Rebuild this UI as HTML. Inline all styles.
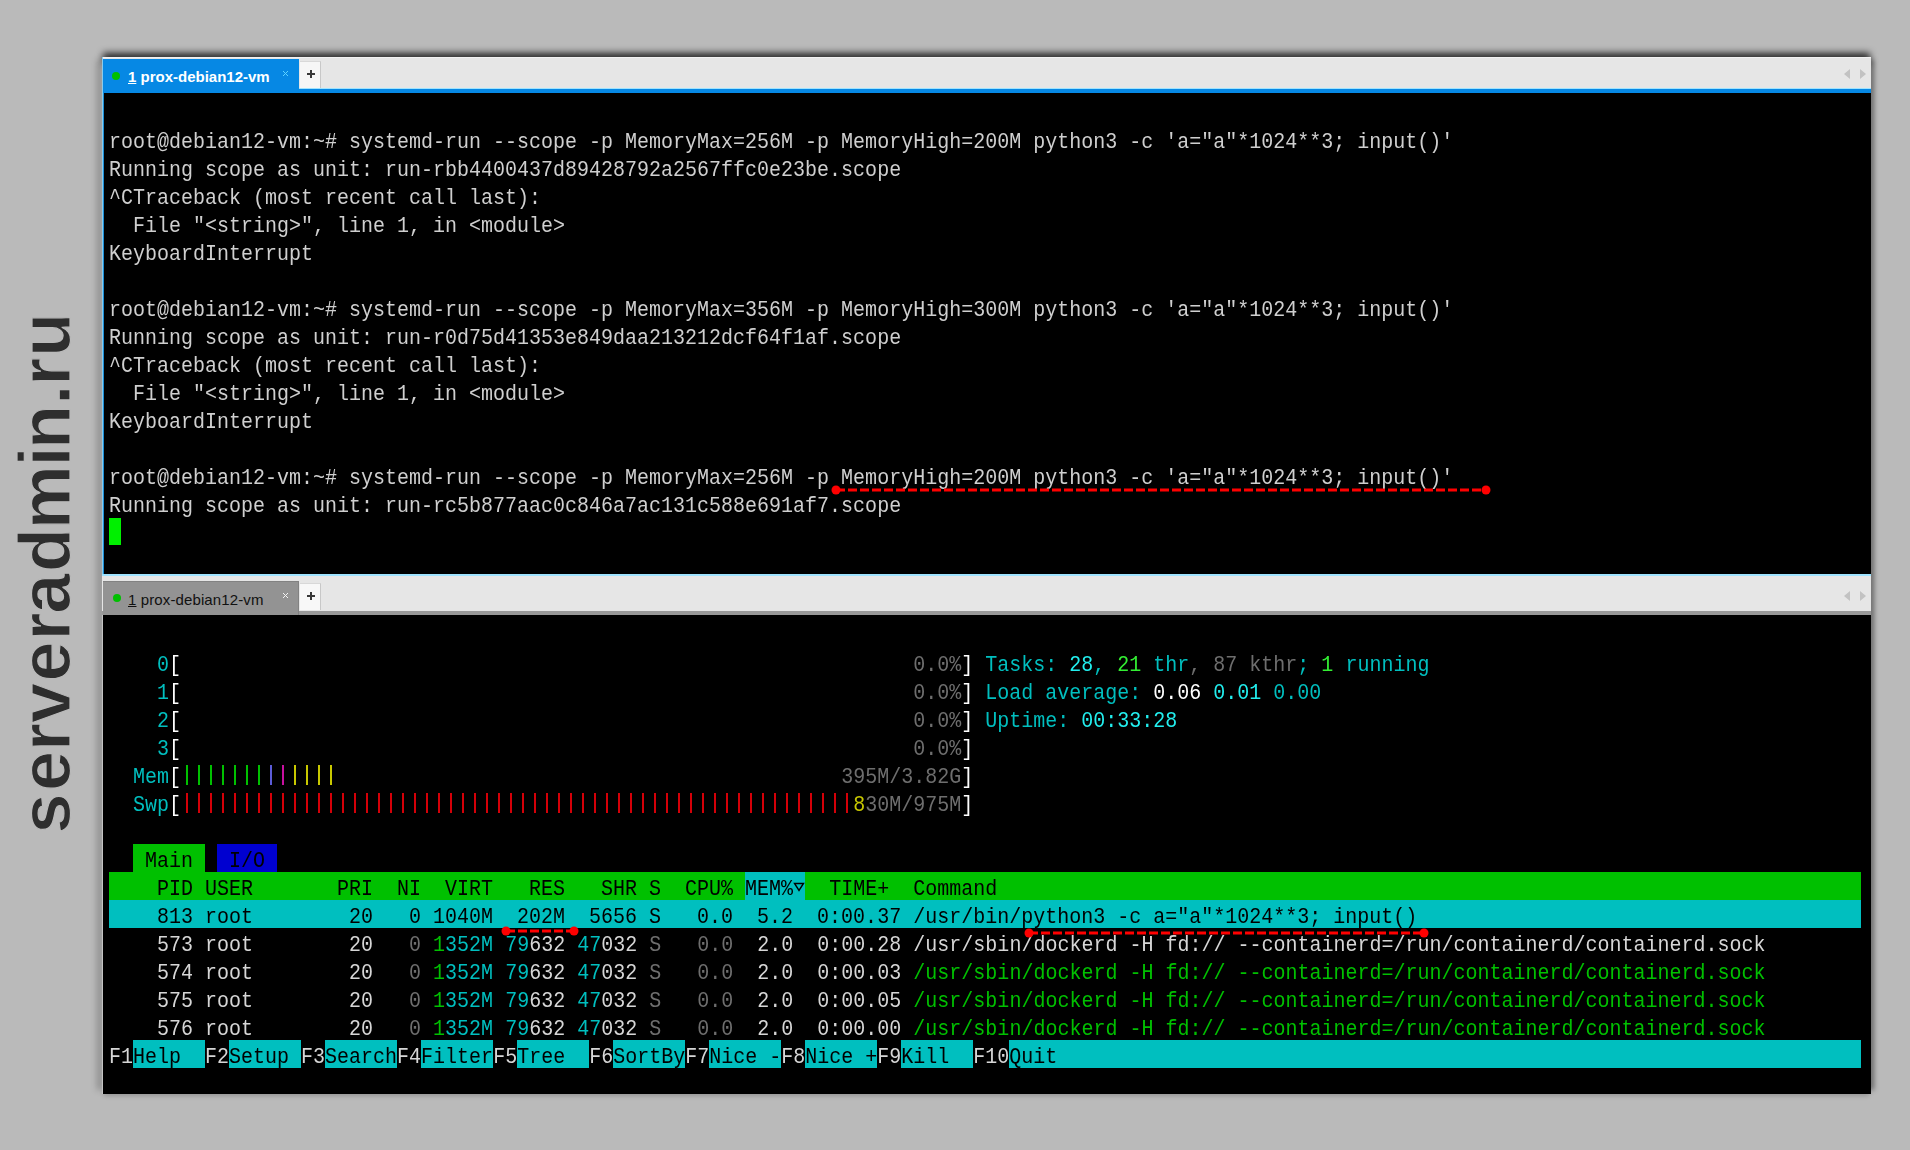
<!DOCTYPE html><html><head><meta charset="utf-8"><style>
html,body{margin:0;padding:0}
body{width:1910px;height:1150px;overflow:hidden;background:#bababa;position:relative}
.a{position:absolute}
.t{position:absolute;left:109px;font-family:"Liberation Mono",monospace;font-size:20px;line-height:28px;height:28px;white-space:pre;transform:scaleY(1.12);transform-origin:0 19px}
.t2{transform:scaleY(1.06)}
.ui{font-family:"Liberation Sans",sans-serif}
</style></head><body><div class="a ui" style="left:70px;top:831px;width:0;height:0;transform-origin:0 0;transform:rotate(-90deg);font-size:72px;line-height:72px;font-weight:bold;color:#2e2e2e;-webkit-text-stroke:1.2px #bababa;paint-order:normal;white-space:nowrap"><div style="position:absolute;left:-2.50px;top:-61px">s</div><div style="position:absolute;left:40.00px;top:-61px">e</div><div style="position:absolute;left:80.00px;top:-61px">r</div><div style="position:absolute;left:108.00px;top:-61px">v</div><div style="position:absolute;left:149.45px;top:-61px">e</div><div style="position:absolute;left:190.50px;top:-61px">r</div><div style="position:absolute;left:217.25px;top:-61px">a</div><div style="position:absolute;left:259.10px;top:-61px">d</div><div style="position:absolute;left:301.75px;top:-61px">m</div><div style="position:absolute;left:364.50px;top:-61px">i</div><div style="position:absolute;left:382.10px;top:-61px">n</div><div style="position:absolute;left:426.30px;top:-61px">.</div><div style="position:absolute;left:445.35px;top:-61px">r</div><div style="position:absolute;left:474.30px;top:-61px">u</div></div>
<div class="a" style="left:103px;top:53px;width:1767px;height:10px;background:rgba(0,0,0,.8);filter:blur(3.5px)"></div>
<div class="a" style="left:97px;top:60px;width:6px;height:1030px;background:rgba(0,0,0,.25);filter:blur(3px)"></div>
<div class="a" style="left:1868px;top:60px;width:6px;height:1030px;background:rgba(0,0,0,.45);filter:blur(2.5px)"></div>
<div class="a" style="left:104px;top:1090px;width:1765px;height:6px;background:rgba(0,0,0,.2);filter:blur(2px)"></div>
<div class="a" style="left:102px;top:57px;width:1769px;height:1037px;background:#000;border-left:1px solid #c4c4c4;box-sizing:border-box"></div>
<div class="a" style="left:102px;top:57px;width:1769px;height:32px;background:#e6e6e6;border-top:1px solid #f2f2f2;box-sizing:border-box"></div>
<div class="a" style="left:102px;top:88px;width:1769px;height:1px;background:#9fe3ff"></div>
<div class="a" style="left:102px;top:89px;width:1769px;height:4px;background:#0688e4"></div>
<div class="a" style="left:103px;top:59px;width:196px;height:34px;background:#0688e4"></div>
<div class="a" style="left:112px;top:72px;width:8px;height:8px;border-radius:50%;background:#00c000"></div>
<div class="a ui" style="left:128px;top:67px;font-size:15px;font-weight:bold;color:#fff;line-height:20px;white-space:nowrap"><span style="text-decoration:underline">1</span> prox-debian12-vm</div>
<svg class="a" style="left:282px;top:70px" width="8" height="8"><path d="M1 1L6 6M6 1L1 6" stroke="#5fd3ff" stroke-width="1"/></svg>
<div class="a" style="left:300px;top:61px;width:20px;height:26px;background:#f6f6f6;border-right:1px solid #c8c8c8;border-top:1px solid #d8d8d8"></div>
<div class="a" style="left:307px;top:73px;width:8px;height:2px;background:#383838"></div><div class="a" style="left:310px;top:70px;width:2px;height:8px;background:#383838"></div>
<div class="a" style="left:1844px;top:69px;width:0;height:0;border-top:5px solid transparent;border-bottom:5px solid transparent;border-right:6px solid #c2c2c2"></div><div class="a" style="left:1860px;top:69px;width:0;height:0;border-top:5px solid transparent;border-bottom:5px solid transparent;border-left:6px solid #c2c2c2"></div>
<div class="a" style="left:102px;top:57px;width:1px;height:519px;background:#8ccbea"></div>
<div class="a" style="left:103px;top:93px;width:1px;height:481px;background:#1c8ed6"></div>
<div class="a" style="left:102px;top:574px;width:1769px;height:2px;background:#9fe3ff"></div>
<div class="a" style="left:102px;top:576px;width:1769px;height:35px;background:#e6e6e6"></div>
<div class="a" style="left:102px;top:611px;width:1769px;height:4px;background:#999"></div>
<div class="a" style="left:103px;top:581px;width:196px;height:34px;background:#939393;border-top:1px solid #828282;border-right:1px solid #828282;box-sizing:border-box"></div>
<div class="a" style="left:113px;top:594px;width:8px;height:8px;border-radius:50%;background:#00c000"></div>
<div class="a ui" style="left:128px;top:590px;font-size:15px;letter-spacing:0.12px;color:#111;line-height:20px;white-space:nowrap"><span style="text-decoration:underline">1</span> prox-debian12-vm</div>
<svg class="a" style="left:282px;top:592px" width="8" height="8"><path d="M1 1L6 6M6 1L1 6" stroke="#f4f4f4" stroke-width="1"/></svg>
<div class="a" style="left:300px;top:583px;width:20px;height:26px;background:#f8f8f8;border-right:1px solid #c8c8c8;border-top:1px solid #d8d8d8"></div>
<div class="a" style="left:307px;top:595px;width:8px;height:2px;background:#383838"></div><div class="a" style="left:310px;top:592px;width:2px;height:8px;background:#383838"></div>
<div class="a" style="left:1844px;top:591px;width:0;height:0;border-top:5px solid transparent;border-bottom:5px solid transparent;border-right:6px solid #c2c2c2"></div><div class="a" style="left:1860px;top:591px;width:0;height:0;border-top:5px solid transparent;border-bottom:5px solid transparent;border-left:6px solid #c2c2c2"></div>
<div class="a" style="left:109px;top:518px;width:12px;height:27px;background:#00f000"></div>
<div class="a" style="left:186px;top:765px;width:2px;height:20px;background:#00c000"></div>
<div class="a" style="left:198px;top:765px;width:2px;height:20px;background:#00c000"></div>
<div class="a" style="left:210px;top:765px;width:2px;height:20px;background:#00c000"></div>
<div class="a" style="left:222px;top:765px;width:2px;height:20px;background:#00c000"></div>
<div class="a" style="left:234px;top:765px;width:2px;height:20px;background:#00c000"></div>
<div class="a" style="left:246px;top:765px;width:2px;height:20px;background:#00c000"></div>
<div class="a" style="left:258px;top:765px;width:2px;height:20px;background:#00c000"></div>
<div class="a" style="left:270px;top:765px;width:2px;height:20px;background:#5c5cd8"></div>
<div class="a" style="left:282px;top:765px;width:2px;height:20px;background:#c810a0"></div>
<div class="a" style="left:294px;top:765px;width:2px;height:20px;background:#c8c800"></div>
<div class="a" style="left:306px;top:765px;width:2px;height:20px;background:#c8c800"></div>
<div class="a" style="left:318px;top:765px;width:2px;height:20px;background:#c8c800"></div>
<div class="a" style="left:330px;top:765px;width:2px;height:20px;background:#c8c800"></div>
<div class="a" style="left:186px;top:793px;width:2px;height:20px;background:#d40008"></div>
<div class="a" style="left:198px;top:793px;width:2px;height:20px;background:#d40008"></div>
<div class="a" style="left:210px;top:793px;width:2px;height:20px;background:#d40008"></div>
<div class="a" style="left:222px;top:793px;width:2px;height:20px;background:#d40008"></div>
<div class="a" style="left:234px;top:793px;width:2px;height:20px;background:#d40008"></div>
<div class="a" style="left:246px;top:793px;width:2px;height:20px;background:#d40008"></div>
<div class="a" style="left:258px;top:793px;width:2px;height:20px;background:#d40008"></div>
<div class="a" style="left:270px;top:793px;width:2px;height:20px;background:#d40008"></div>
<div class="a" style="left:282px;top:793px;width:2px;height:20px;background:#d40008"></div>
<div class="a" style="left:294px;top:793px;width:2px;height:20px;background:#d40008"></div>
<div class="a" style="left:306px;top:793px;width:2px;height:20px;background:#d40008"></div>
<div class="a" style="left:318px;top:793px;width:2px;height:20px;background:#d40008"></div>
<div class="a" style="left:330px;top:793px;width:2px;height:20px;background:#d40008"></div>
<div class="a" style="left:342px;top:793px;width:2px;height:20px;background:#d40008"></div>
<div class="a" style="left:354px;top:793px;width:2px;height:20px;background:#d40008"></div>
<div class="a" style="left:366px;top:793px;width:2px;height:20px;background:#d40008"></div>
<div class="a" style="left:378px;top:793px;width:2px;height:20px;background:#d40008"></div>
<div class="a" style="left:390px;top:793px;width:2px;height:20px;background:#d40008"></div>
<div class="a" style="left:402px;top:793px;width:2px;height:20px;background:#d40008"></div>
<div class="a" style="left:414px;top:793px;width:2px;height:20px;background:#d40008"></div>
<div class="a" style="left:426px;top:793px;width:2px;height:20px;background:#d40008"></div>
<div class="a" style="left:438px;top:793px;width:2px;height:20px;background:#d40008"></div>
<div class="a" style="left:450px;top:793px;width:2px;height:20px;background:#d40008"></div>
<div class="a" style="left:462px;top:793px;width:2px;height:20px;background:#d40008"></div>
<div class="a" style="left:474px;top:793px;width:2px;height:20px;background:#d40008"></div>
<div class="a" style="left:486px;top:793px;width:2px;height:20px;background:#d40008"></div>
<div class="a" style="left:498px;top:793px;width:2px;height:20px;background:#d40008"></div>
<div class="a" style="left:510px;top:793px;width:2px;height:20px;background:#d40008"></div>
<div class="a" style="left:522px;top:793px;width:2px;height:20px;background:#d40008"></div>
<div class="a" style="left:534px;top:793px;width:2px;height:20px;background:#d40008"></div>
<div class="a" style="left:546px;top:793px;width:2px;height:20px;background:#d40008"></div>
<div class="a" style="left:558px;top:793px;width:2px;height:20px;background:#d40008"></div>
<div class="a" style="left:570px;top:793px;width:2px;height:20px;background:#d40008"></div>
<div class="a" style="left:582px;top:793px;width:2px;height:20px;background:#d40008"></div>
<div class="a" style="left:594px;top:793px;width:2px;height:20px;background:#d40008"></div>
<div class="a" style="left:606px;top:793px;width:2px;height:20px;background:#d40008"></div>
<div class="a" style="left:618px;top:793px;width:2px;height:20px;background:#d40008"></div>
<div class="a" style="left:630px;top:793px;width:2px;height:20px;background:#d40008"></div>
<div class="a" style="left:642px;top:793px;width:2px;height:20px;background:#d40008"></div>
<div class="a" style="left:654px;top:793px;width:2px;height:20px;background:#d40008"></div>
<div class="a" style="left:666px;top:793px;width:2px;height:20px;background:#d40008"></div>
<div class="a" style="left:678px;top:793px;width:2px;height:20px;background:#d40008"></div>
<div class="a" style="left:690px;top:793px;width:2px;height:20px;background:#d40008"></div>
<div class="a" style="left:702px;top:793px;width:2px;height:20px;background:#d40008"></div>
<div class="a" style="left:714px;top:793px;width:2px;height:20px;background:#d40008"></div>
<div class="a" style="left:726px;top:793px;width:2px;height:20px;background:#d40008"></div>
<div class="a" style="left:738px;top:793px;width:2px;height:20px;background:#d40008"></div>
<div class="a" style="left:750px;top:793px;width:2px;height:20px;background:#d40008"></div>
<div class="a" style="left:762px;top:793px;width:2px;height:20px;background:#d40008"></div>
<div class="a" style="left:774px;top:793px;width:2px;height:20px;background:#d40008"></div>
<div class="a" style="left:786px;top:793px;width:2px;height:20px;background:#d40008"></div>
<div class="a" style="left:798px;top:793px;width:2px;height:20px;background:#d40008"></div>
<div class="a" style="left:810px;top:793px;width:2px;height:20px;background:#d40008"></div>
<div class="a" style="left:822px;top:793px;width:2px;height:20px;background:#d40008"></div>
<div class="a" style="left:834px;top:793px;width:2px;height:20px;background:#d40008"></div>
<div class="a" style="left:846px;top:793px;width:2px;height:20px;background:#d40008"></div>
<div class="a" style="left:133px;top:844px;width:72px;height:28px;background:#00c000"></div>
<div class="a" style="left:217px;top:844px;width:60px;height:28px;background:#0000d0"></div>
<div class="a" style="left:109px;top:872px;width:636px;height:28px;background:#00c000"></div>
<div class="a" style="left:745px;top:872px;width:60px;height:28px;background:#00bfbf"></div>
<div class="a" style="left:805px;top:872px;width:1056px;height:28px;background:#00c000"></div>
<div class="a" style="left:109px;top:900px;width:1752px;height:28px;background:#00bfbf"></div>
<div class="a" style="left:133px;top:1040px;width:72px;height:28px;background:#00bfbf"></div>
<div class="a" style="left:229px;top:1040px;width:72px;height:28px;background:#00bfbf"></div>
<div class="a" style="left:325px;top:1040px;width:72px;height:28px;background:#00bfbf"></div>
<div class="a" style="left:421px;top:1040px;width:72px;height:28px;background:#00bfbf"></div>
<div class="a" style="left:517px;top:1040px;width:72px;height:28px;background:#00bfbf"></div>
<div class="a" style="left:613px;top:1040px;width:72px;height:28px;background:#00bfbf"></div>
<div class="a" style="left:709px;top:1040px;width:72px;height:28px;background:#00bfbf"></div>
<div class="a" style="left:805px;top:1040px;width:72px;height:28px;background:#00bfbf"></div>
<div class="a" style="left:901px;top:1040px;width:72px;height:28px;background:#00bfbf"></div>
<div class="a" style="left:1009px;top:1040px;width:48px;height:28px;background:#00bfbf"></div>
<div class="a" style="left:1057px;top:1040px;width:804px;height:28px;background:#00bfbf"></div>
<div class="t t2" style="top:129px"><span style="color:#cfcfcf">root@debian12-vm:~# systemd-run --scope -p MemoryMax=256M -p MemoryHigh=200M python3 -c 'a="a"*1024**3; input()'</span></div>
<div class="t t2" style="top:157px"><span style="color:#cfcfcf">Running scope as unit: run-rbb4400437d89428792a2567ffc0e23be.scope</span></div>
<div class="t t2" style="top:185px"><span style="color:#cfcfcf">^CTraceback (most recent call last):</span></div>
<div class="t t2" style="top:213px"><span style="color:#cfcfcf">  File "&lt;string&gt;", line 1, in &lt;module&gt;</span></div>
<div class="t t2" style="top:241px"><span style="color:#cfcfcf">KeyboardInterrupt</span></div>
<div class="t t2" style="top:297px"><span style="color:#cfcfcf">root@debian12-vm:~# systemd-run --scope -p MemoryMax=356M -p MemoryHigh=300M python3 -c 'a="a"*1024**3; input()'</span></div>
<div class="t t2" style="top:325px"><span style="color:#cfcfcf">Running scope as unit: run-r0d75d41353e849daa213212dcf64f1af.scope</span></div>
<div class="t t2" style="top:353px"><span style="color:#cfcfcf">^CTraceback (most recent call last):</span></div>
<div class="t t2" style="top:381px"><span style="color:#cfcfcf">  File "&lt;string&gt;", line 1, in &lt;module&gt;</span></div>
<div class="t t2" style="top:409px"><span style="color:#cfcfcf">KeyboardInterrupt</span></div>
<div class="t t2" style="top:465px"><span style="color:#cfcfcf">root@debian12-vm:~# systemd-run --scope -p MemoryMax=256M -p MemoryHigh=200M python3 -c 'a="a"*1024**3; input()'</span></div>
<div class="t t2" style="top:493px"><span style="color:#cfcfcf">Running scope as unit: run-rc5b877aac0c846a7ac131c588e691af7.scope</span></div>
<div class="t" style="top:652px"><span style="">    </span><span style="color:#00bfbf">0</span><span style="color:#ffffff">[</span><span style="">                                                             </span><span style="color:#6e6e6e">0.0%</span><span style="color:#ffffff">]</span><span style=""> </span><span style="color:#00bfbf">Tasks: </span><span style="color:#22eeee">28</span><span style="color:#00bfbf">, </span><span style="color:#33ee33">21</span><span style="color:#00bfbf"> thr</span><span style="color:#6e6e6e">, </span><span style="color:#6e6e6e">87</span><span style="color:#6e6e6e"> kthr</span><span style="color:#00bfbf">; </span><span style="color:#33ee33">1</span><span style="color:#00bfbf"> running</span></div>
<div class="t" style="top:680px"><span style="">    </span><span style="color:#00bfbf">1</span><span style="color:#ffffff">[</span><span style="">                                                             </span><span style="color:#6e6e6e">0.0%</span><span style="color:#ffffff">]</span><span style=""> </span><span style="color:#00bfbf">Load average: </span><span style="color:#ffffff">0.06 </span><span style="color:#22eeee">0.01 </span><span style="color:#00bfbf">0.00</span></div>
<div class="t" style="top:708px"><span style="">    </span><span style="color:#00bfbf">2</span><span style="color:#ffffff">[</span><span style="">                                                             </span><span style="color:#6e6e6e">0.0%</span><span style="color:#ffffff">]</span><span style=""> </span><span style="color:#00bfbf">Uptime: </span><span style="color:#22eeee">00:33:28</span></div>
<div class="t" style="top:736px"><span style="">    </span><span style="color:#00bfbf">3</span><span style="color:#ffffff">[</span><span style="">                                                             </span><span style="color:#6e6e6e">0.0%</span><span style="color:#ffffff">]</span></div>
<div class="t" style="top:764px"><span style="">  </span><span style="color:#00bfbf">Mem</span><span style="color:#ffffff">[</span><span style="">             </span><span style="">                                          </span><span style="color:#6e6e6e">395M/3.82G</span><span style="color:#ffffff">]</span></div>
<div class="t" style="top:792px"><span style="">  </span><span style="color:#00bfbf">Swp</span><span style="color:#ffffff">[</span><span style="">                                                        </span><span style="color:#c8c800">8</span><span style="color:#6e6e6e">30M/975M</span><span style="color:#ffffff">]</span></div>
<div class="t" style="top:848px"><span style="">  </span><span style="color:#000000"> Main </span><span style=""> </span><span style="color:#000000"> I/O </span></div>
<div class="t" style="top:876px"><span style="color:#000000">    PID USER       PRI  NI  VIRT   RES   SHR S  CPU% </span><span style="color:#000000">MEM% </span><span style="color:#000000">  TIME+  Command                                                                        </span></div>
<div class="t" style="top:904px"><span style="color:#000000">    813 root        20   0 1040M  202M  5656 S   0.0  5.2  0:00.37 /usr/bin/python3 -c a="a"*1024**3; input()                                     </span></div>
<div class="t" style="top:932px"><span style="color:#d6d6d6">    573 root        20   </span><span style="color:#6e6e6e">0</span><span style=""> </span><span style="color:#00c000">1</span><span style="color:#00bfbf">352M</span><span style=""> </span><span style="color:#00bfbf">79</span><span style="color:#d6d6d6">632</span><span style=""> </span><span style="color:#00bfbf">47</span><span style="color:#d6d6d6">032</span><span style=""> </span><span style="color:#6e6e6e">S</span><span style="">   </span><span style="color:#6e6e6e">0.0</span><span style="">  </span><span style="color:#d6d6d6">2.0</span><span style="">  </span><span style="color:#d6d6d6">0:00.28</span><span style=""> </span><span style="color:#d6d6d6">/usr/sbin/dockerd -H fd:// --containerd=/run/containerd/containerd.sock</span></div>
<div class="t" style="top:960px"><span style="color:#d6d6d6">    574 root        20   </span><span style="color:#6e6e6e">0</span><span style=""> </span><span style="color:#00c000">1</span><span style="color:#00bfbf">352M</span><span style=""> </span><span style="color:#00bfbf">79</span><span style="color:#d6d6d6">632</span><span style=""> </span><span style="color:#00bfbf">47</span><span style="color:#d6d6d6">032</span><span style=""> </span><span style="color:#6e6e6e">S</span><span style="">   </span><span style="color:#6e6e6e">0.0</span><span style="">  </span><span style="color:#d6d6d6">2.0</span><span style="">  </span><span style="color:#d6d6d6">0:00.03</span><span style=""> </span><span style="color:#00c000">/usr/sbin/dockerd -H fd:// --containerd=/run/containerd/containerd.sock</span></div>
<div class="t" style="top:988px"><span style="color:#d6d6d6">    575 root        20   </span><span style="color:#6e6e6e">0</span><span style=""> </span><span style="color:#00c000">1</span><span style="color:#00bfbf">352M</span><span style=""> </span><span style="color:#00bfbf">79</span><span style="color:#d6d6d6">632</span><span style=""> </span><span style="color:#00bfbf">47</span><span style="color:#d6d6d6">032</span><span style=""> </span><span style="color:#6e6e6e">S</span><span style="">   </span><span style="color:#6e6e6e">0.0</span><span style="">  </span><span style="color:#d6d6d6">2.0</span><span style="">  </span><span style="color:#d6d6d6">0:00.05</span><span style=""> </span><span style="color:#00c000">/usr/sbin/dockerd -H fd:// --containerd=/run/containerd/containerd.sock</span></div>
<div class="t" style="top:1016px"><span style="color:#d6d6d6">    576 root        20   </span><span style="color:#6e6e6e">0</span><span style=""> </span><span style="color:#00c000">1</span><span style="color:#00bfbf">352M</span><span style=""> </span><span style="color:#00bfbf">79</span><span style="color:#d6d6d6">632</span><span style=""> </span><span style="color:#00bfbf">47</span><span style="color:#d6d6d6">032</span><span style=""> </span><span style="color:#6e6e6e">S</span><span style="">   </span><span style="color:#6e6e6e">0.0</span><span style="">  </span><span style="color:#d6d6d6">2.0</span><span style="">  </span><span style="color:#d6d6d6">0:00.00</span><span style=""> </span><span style="color:#00c000">/usr/sbin/dockerd -H fd:// --containerd=/run/containerd/containerd.sock</span></div>
<div class="t" style="top:1044px"><span style="color:#d6d6d6">F1</span><span style="color:#000000">Help  </span><span style="color:#d6d6d6">F2</span><span style="color:#000000">Setup </span><span style="color:#d6d6d6">F3</span><span style="color:#000000">Search</span><span style="color:#d6d6d6">F4</span><span style="color:#000000">Filter</span><span style="color:#d6d6d6">F5</span><span style="color:#000000">Tree  </span><span style="color:#d6d6d6">F6</span><span style="color:#000000">SortBy</span><span style="color:#d6d6d6">F7</span><span style="color:#000000">Nice -</span><span style="color:#d6d6d6">F8</span><span style="color:#000000">Nice +</span><span style="color:#d6d6d6">F9</span><span style="color:#000000">Kill  </span><span style="color:#d6d6d6">F10</span><span style="color:#000000">Quit</span><span style="color:#000000">                                                                   </span></div>
<svg class="a" style="left:790px;top:878px" width="18" height="18"><path d="M4.5 5.5H13.5L9 12.5Z" fill="none" stroke="#000" stroke-width="1.4" stroke-linejoin="miter"/></svg>
<svg class="a" style="left:0;top:0" width="1910" height="1150"><line x1="836" y1="490" x2="1486" y2="490" stroke="#ff0000" stroke-width="3" stroke-dasharray="9 3"/><circle cx="836" cy="490" r="4.5" fill="#ff0000"/><circle cx="1486" cy="490" r="4.5" fill="#ff0000"/></svg>
<svg class="a" style="left:0;top:0" width="1910" height="1150"><line x1="506" y1="931" x2="574" y2="931" stroke="#ff0000" stroke-width="3" stroke-dasharray="9 3"/><circle cx="506" cy="931" r="4.5" fill="#ff0000"/><circle cx="574" cy="931" r="4.5" fill="#ff0000"/></svg>
<svg class="a" style="left:0;top:0" width="1910" height="1150"><line x1="1029" y1="933" x2="1424" y2="933" stroke="#ff0000" stroke-width="3" stroke-dasharray="9 3"/><circle cx="1029" cy="933" r="4.5" fill="#ff0000"/><circle cx="1424" cy="933" r="4.5" fill="#ff0000"/></svg></body></html>
